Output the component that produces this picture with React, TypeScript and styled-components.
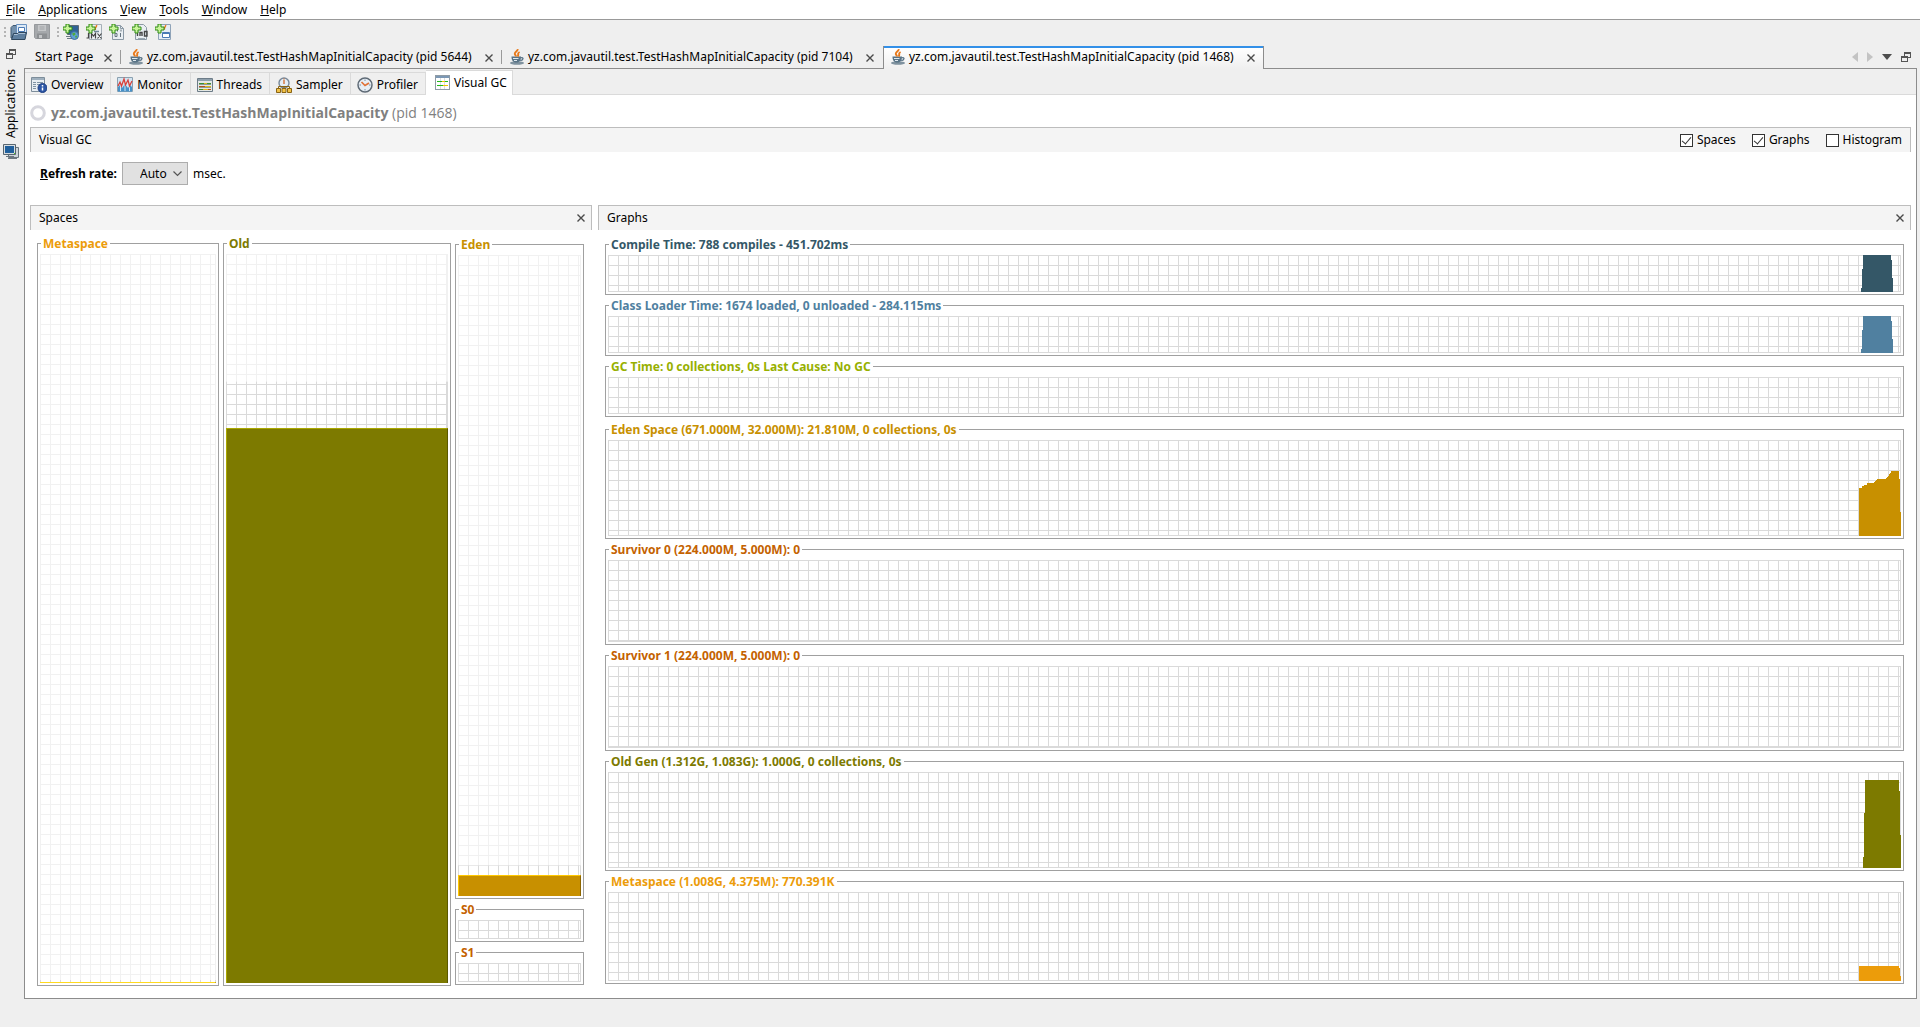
import React, { useState } from "react";
import styled, { createGlobalStyle, css } from "styled-components";

const GlobalStyle = createGlobalStyle`
  *, *::before, *::after { box-sizing: border-box; }
  body { margin: 0; background: #efefef; }
  body, button, select, input {
    font-family: "Noto Sans", "Open Sans", sans-serif;
    font-size: 12px;
    line-height: 16px;
    color: #000;
  }
  button { margin: 0; padding: 0; border: 0; background: none; white-space: nowrap; }
  svg { display: block; flex: none; }
`;

const palette = {
  chrome: "#efefef",
  line: "#8c8c8c",
  frame: "#a0a0a0",
  soft: "#bdbdbd",
  tabLine: "#dadada",
  grid: "#dadada",
  gridLight: "#f1f1f1",
  compile: "#345767",
  loader: "#5080a0",
  gc: "#97b000",
  eden: "#c89000",
  survivor: "#c46200",
  old: "#7d7a00",
  meta: "#ec9c0a",
};

/* ---------- window shell ---------- */

const Window = styled.div`
  display: flex;
  flex-direction: column;
  min-height: 100vh;
`;

const MenuBar = styled.nav`
  display: flex;
  gap: 13px;
  height: 20px;
  padding: 0 6px;
  background: #fff;
  border-bottom: 1px solid #999;
`;

const MenuItem = styled.button`
  height: 19px;
  line-height: 19px;
`;

const Toolbar = styled.div`
  display: flex;
  align-items: center;
  gap: 7px;
  height: 24px;
  padding: 0 4px;
`;

const ToolGroup = styled.div`
  display: flex;
  align-items: center;
  gap: 7px;
`;

const Grip = styled.span`
  width: 2px;
  height: 11px;
  margin-right: -3px;
  background: repeating-linear-gradient(#b4b4b4 0 2px, transparent 2px 4px);
`;

const Workspace = styled.div`
  display: flex;
  flex: 1;
  padding: 2px 3px 28px 0;
`;

const Rail = styled.aside`
  display: flex;
  flex-direction: column;
  align-items: center;
  width: 24px;
  flex: none;
  padding: 3px 2px 0 0;
  gap: 10px;
`;

const RailButton = styled.button`
  display: flex;
  align-items: center;
  gap: 6px;
  writing-mode: vertical-rl;
  transform: rotate(180deg);

  svg { transform: rotate(180deg); }
`;

const Editor = styled.main`
  display: flex;
  flex-direction: column;
  flex: 1;
  min-width: 0;
`;

/* ---------- document tabs ---------- */

const DocTabs = styled.div`
  display: flex;
  height: 23px;
`;

const DocTab = styled.div<{ $active?: boolean; $divider?: boolean; $process?: boolean }>`
  display: flex;
  align-items: center;
  justify-content: space-between;
  height: 23px;
  min-width: ${(p) => (p.$process ? 381 : 97)}px;
  padding: 0 9px 0 8px;
  gap: 4px;
  border-bottom: 1px solid ${palette.line};
  position: relative;

  ${(p) =>
    p.$divider &&
    css`
      &::after {
        content: "";
        position: absolute;
        right: 0;
        top: 4px;
        height: 14px;
        border-right: 1px solid #9a9a9a;
      }
    `}

  ${(p) =>
    p.$active &&
    css`
      border: solid ${palette.line};
      border-width: 0 1px;
      padding: 0 8px 1px 7px;
      background: linear-gradient(#3390e8 0 2px, #fff 2px, ${palette.chrome});
    `}
`;

const DocTitle = styled.button`
  display: flex;
  align-items: center;
  gap: 4px;
  height: 22px;
`;

const CloseButton = styled.button`
  display: flex;
  padding-top: 2px;
`;

const DocTabsEnd = styled.div`
  display: flex;
  flex: 1;
  justify-content: flex-end;
  align-items: center;
  gap: 9px;
  padding-right: 6px;
  border-bottom: 1px solid ${palette.line};
`;

const Document = styled.section`
  display: flex;
  flex-direction: column;
  flex: 1;
  background: #fff;
  border: solid ${palette.line};
  border-width: 0 1px 1px;
`;

/* ---------- view tabs ---------- */

const ViewTabs = styled.div`
  display: flex;
  align-items: flex-end;
  height: 26px;
  background: ${palette.chrome};
  box-shadow: inset 0 -1px ${palette.tabLine};
`;

const ViewTab = styled.button<{ $active?: boolean }>`
  display: flex;
  align-items: center;
  gap: 4px;
  height: 23px;
  padding: 3px 7px 0 6px;
  border: solid ${palette.tabLine};
  border-width: 1px 1px 1px 0;

  ${(p) =>
    p.$active &&
    css`
      height: 25px;
      padding: 0 5px 1px 9px;
      border-width: 1px 1px 0 0;
      background: #fff;
    `}
`;

/* ---------- document content ---------- */

const Content = styled.div`
  display: flex;
  flex-direction: column;
  flex: 1;
  padding: 0 5px;
`;

const Heading = styled.h1`
  display: flex;
  align-items: center;
  gap: 5px;
  height: 32px;
  margin: 0;
  padding-top: 3px;
  font-family: "Open Sans", "Noto Sans", sans-serif;
  font-size: 14px;
  line-height: 20px;
  color: #808080;
`;

const Pid = styled.span`
  font-weight: 400;
`;

const HeaderBar = styled.header`
  display: flex;
  align-items: center;
  justify-content: space-between;
  height: 25px;
  padding: 0 6px 0 8px;
  background: #f4f4f4;
  border: solid ${palette.soft};
  border-width: 1px 1px 0;
`;

const BarTitle = styled.h2`
  margin: 0;
  font-size: 12px;
  font-weight: 400;
`;

const Toggles = styled.div`
  display: flex;
  gap: 16px;
  padding-right: 2px;
`;

const Toggle = styled.label`
  display: flex;
  align-items: center;
  gap: 4px;
`;

const Tick = styled.input`
  appearance: none;
  display: grid;
  place-items: center;
  width: 13px;
  height: 13px;
  margin: 0;
  background: #fff;
  border: 1px solid #333;

  &:checked::after {
    content: "";
    width: 5px;
    height: 9px;
    margin-bottom: 3px;
    border: solid #333;
    border-width: 0 1px 1px 0;
    transform: rotate(40deg);
  }
`;

const RateRow = styled.div`
  display: flex;
  align-items: center;
  gap: 5px;
  height: 53px;
  padding: 0 10px 10px;
`;

const RateLabel = styled.label`
  font-weight: 700;
`;

const SelectBox = styled.span`
  display: grid;
  align-items: center;
  width: 66px;

  > * { grid-area: 1 / 1; }
  > svg { justify-self: end; margin-right: 6px; pointer-events: none; }
`;

const Select = styled.select`
  appearance: none;
  height: 23px;
  padding: 0 17px;
  background: #e1e1e1;
  border: 1px solid #adadad;
  border-radius: 0;
`;

const Panels = styled.div`
  display: grid;
  grid-template-columns: minmax(0, 562fr) minmax(0, 1313fr);
  gap: 6px;
  flex: 1;
`;

const Panel = styled.section`
  display: flex;
  flex-direction: column;
`;

/* ---------- framed plots ---------- */

const SpaceColumns = styled.div`
  display: grid;
  grid-template-columns: minmax(0, 182fr) minmax(0, 228fr) minmax(0, 129fr);
  gap: 4px;
  flex: 1;
  padding: 5px 8px 12px 7px;
`;

const YoungColumn = styled.div`
  display: flex;
  flex-direction: column;
  gap: 2px;
  padding: 1px 0;
`;

const GraphStack = styled.div`
  display: flex;
  flex-direction: column;
  gap: 4px;
  flex: 1;
  padding: 6px 7px 14px;
`;

const GraphGroup = styled.div<{ $grow?: boolean }>`
  display: flex;
  flex-direction: column;
  gap: 2px;
  flex: ${(p) => (p.$grow ? "1" : "none")};
`;

const Frame = styled.fieldset<{ $height?: number; $weight?: number }>`
  display: flex;
  min-width: 0;
  margin: 0;
  padding: 2px;
  border: 1px solid ${palette.frame};
  flex: ${(p) => (p.$height ? `0 0 ${p.$height}px` : `${p.$weight ?? 1} 1 0`)};
`;

const FrameTitle = styled.legend<{ $color: string }>`
  margin-left: 1px;
  padding: 0 2px;
  font-weight: 700;
  line-height: 17px;
  white-space: nowrap;
  color: ${(p) => p.$color};
`;

const gridLines = (color: string) => css`
  background-image:
    linear-gradient(${color}, ${color}),
    linear-gradient(${color}, ${color}),
    linear-gradient(${color} 1px, transparent 1px),
    linear-gradient(90deg, ${color} 1px, transparent 1px);
  background-size: 1px 100%, 100% 1px, 10px 10px, 10px 10px;
  background-position: right top, left bottom, left top, left top;
  background-repeat: no-repeat, no-repeat, repeat, repeat;
`;

const Grid = styled.div<{ $light?: boolean }>`
  position: relative;
  flex: 1;
  ${(p) => gridLines(p.$light ? palette.gridLight : palette.grid)}
`;

const Committed = styled.div`
  position: absolute;
  inset: 0;
  background-color: #fff;
  ${gridLines(palette.grid)}
`;

const Used = styled.div<{ $fill: string; $hi: string; $lo: string }>`
  position: absolute;
  inset: auto 0 0;
  min-height: 1px;
  background: ${(p) => p.$fill};
  border: solid ${(p) => p.$hi};
  border-width: 1px 1px 0;
  border-right-color: ${(p) => p.$lo};
`;

const History = styled.svg`
  position: absolute;
  right: 0;
  top: 0;
  width: 42px;
  height: 100%;
`;

/* ---------- icons ---------- */

const Cross = () => (
  <svg width="8" height="8" viewBox="0 0 8 8" stroke="#4a4a4a" strokeWidth="1.4">
    <path d="M.5.5l7 7M7.5.5l-7 7" />
  </svg>
);

const RestoreIcon = () => (
  <svg width="10" height="10" viewBox="0 0 10 10" fill="none" stroke="#555" shapeRendering="crispEdges">
    <path d="M3.5 4V.5h6v5H7" />
    <path d="M3 1h7M0 5h7" strokeWidth="2" />
    <path d="M.5 4.5h6v5h-6z" />
  </svg>
);

const ChevronDown = () => (
  <svg width="9" height="6" viewBox="0 0 9 6" fill="none" stroke="#555" strokeWidth="1.2">
    <path d="M.5.5l4 4 4-4" />
  </svg>
);

const JavaIcon = () => (
  <svg width="14" height="16" viewBox="0 0 14 16" fill="none">
    <ellipse cx="7" cy="14" rx="7" ry="1.8" fill="#7f929f" />
    <path d="M1.500 7.500h9.500c0 3.500-1 6-4.700 6S1.500 11 1.500 7.500z" fill="#587386" />
    <path d="M3 9.500h5.500M4 11.500h3" stroke="#dfe8ee" />
    <path d="M11 8.800c2.800-.8 2.800 2.200-.8 2.900" stroke="#587386" strokeWidth="1.300" />
    <path d="M7.500 0c1 2-3.500 3-2.600 5.200.3.900 1 1.300 1.100 2.300M9.600 3C6.500 4.500 9.500 5.400 7.600 7.500" stroke="#e8791a" strokeWidth="1.900" />
  </svg>
);

const OpenIcon = () => (
  <svg width="17" height="16" viewBox="0 0 17 16">
    <path d="M1 14V3.500L3 1.500h4v12z" fill="#7390ab" stroke="#3f5870" />
    <path d="M6.500.5h10v9h-10z" fill="#dce9f6" stroke="#6a92c0" />
    <path d="M8.500 3.500h6v4h-6z" fill="#fff" stroke="#4a7ab5" />
    <path d="M1.500 15.500l2-6h4l1-1h8l-1.500 7z" fill="#5e7f9f" stroke="#2f475e" />
    <path d="M4 10.500h3.500l1-1H15" stroke="#a9c0d6" fill="none" />
  </svg>
);

const SaveIcon = () => (
  <svg width="16" height="16" viewBox="0 0 16 16">
    <path d="M.5.5h15v14h-14l-1-1z" fill="#a5a8ab" stroke="#96999c" />
    <path d="M4 1h8v6H4z" fill="#c4c6c8" />
    <path d="M5.500 3h5M5.500 5h5" stroke="#a0a3a6" />
    <path d="M3 9.500h10V15H3z" fill="#8d9093" />
    <path d="M5 11h3v3H5z" fill="#c4c6c8" />
  </svg>
);

const Plus = () => (
  <path d="M3.500.5h3v3h3v3h-3v3h-3v-3h-3v-3h3z" fill="#c9f59a" stroke="#2f8a12" transform="translate(-.5 -.5)" />
);

const AddHostIcon = () => (
  <svg width="16" height="16" viewBox="0 0 16 16">
    <path d="M4.500 1.500h11v9h-11z" fill="#2f6296" stroke="#5d6b76" />
    <path d="M3 12.500h7M4 14.500h5" stroke="#6d7a84" />
    <circle cx="11.500" cy="11.500" r="4" fill="#5f9fd6" stroke="#3d6f9c" />
    <path d="M9 9.500l3-1 .5 2-2 1.500zM12 12l2.500-.5-1.500 3z" fill="#4faa3c" />
    <Plus />
  </svg>
);

const AddJmxIcon = () => (
  <svg width="16" height="16" viewBox="0 0 16 16" fill="none">
    <path d="M3.500.5h12v15h-12z" fill="#edf1f4" stroke="#a5afb7" />
    <path d="M10.500 1c1 1.800-2.500 2.500-1 5" stroke="#e8791a" strokeWidth="1.500" />
    <path d="M8 7.500h5" stroke="#6f8797" strokeWidth="1.500" />
    <path d="M2.500 9v5H.5M5.500 14.500v-5l2 2.500 2-2.500v5M11.500 9.500l4 5M15.500 9.500l-4 5" stroke="#444" strokeWidth="1.200" />
    <Plus />
  </svg>
);

const AddDumpIcon = () => (
  <svg width="16" height="16" viewBox="0 0 16 16" fill="none">
    <path d="M3.500 1.500h8l3 3v11h-11z" fill="#e9eef2" stroke="#8b99a5" />
    <path d="M11.500 1.500v3h3" stroke="#8b99a5" />
    <path d="M8.500 4.500v3M6 9.500h2v3H6zM11.500 9v4M12 5.500v2" stroke="#66747f" />
    <Plus />
  </svg>
);

const AddSnapshotIcon = () => (
  <svg width="16" height="16" viewBox="0 0 16 16" fill="none">
    <path d="M3.500.5h8l3 3v12h-11z" fill="#e9eef2" stroke="#8b99a5" />
    <path d="M5.500 7v5M8 12V8.500h2V12M12.500 7.500h2.500V12h-2.500z" stroke="#444" strokeWidth="1.400" />
    <path d="M6 14.500h7" stroke="#9aa7b1" />
    <Plus />
  </svg>
);

const AddAppIcon = () => (
  <svg width="16" height="16" viewBox="0 0 16 16" fill="none">
    <path d="M3.500.5h12v15h-12z" fill="#e6edf5" stroke="#8fa3b8" />
    <path d="M10.500 1c1 1.500-2 2-1 4.500" stroke="#e8791a" strokeWidth="1.500" />
    <path d="M7.500 8.500h7v5h-7z" fill="#fff" stroke="#4a7ab5" />
    <path d="M8 9.500h6" stroke="#4a7ab5" />
    <Plus />
  </svg>
);

const HostsIcon = () => (
  <svg width="16" height="15" viewBox="0 0 16 15" fill="none">
    <path d="M5.500 3.500h10v10h-10z" fill="#cfd6db" stroke="#69757e" />
    <path d="M.5.5h12v10H.5z" fill="#d8dee2" stroke="#56636d" />
    <path d="M2 2h9v7H2z" fill="#1f5f9c" />
    <path d="M3 12.500h8M5 14.500h9" stroke="#69757e" />
    <path d="M11 9.500h1" stroke="#4c2" />
  </svg>
);

const OverviewIcon = () => (
  <svg width="16" height="16" viewBox="0 0 16 16" fill="none">
    <path d="M.5.5h13v14H.5z" fill="#e8eef3" stroke="#7d8d9a" />
    <path d="M1 2h12" stroke="#9fb0be" strokeWidth="2" />
    <path d="M2 5.500h3M6 5.500h6M2 7.500h3M6 7.500h3M2 9.500h3M2 11.500h3" stroke="#7f93a4" />
    <circle cx="11.500" cy="11" r="4.500" fill="#2c56a6" stroke="#1f3f80" />
    <path d="M11.500 8v1.500M11.500 10.500v3" stroke="#fff" strokeWidth="1.500" />
  </svg>
);

const MonitorIcon = () => (
  <svg width="16" height="16" viewBox="0 0 16 16" fill="none">
    <path d="M.5.5h15v14H.5z" fill="#d3e4f1" stroke="#8aa0b0" />
    <path d="M1 14.500V10l2-2 2 3 3-4 3 4 2-3 2 2v4.500z" fill="#4691c9" />
    <path d="M3.500 8v6M8 7v7M12.500 8v6" stroke="#cfe5f5" />
    <path d="M1 9l2-4 1.500 4L7 2l1.500 6L11 3l1.500 6L15 4" stroke="#d9403a" strokeWidth="1.300" />
  </svg>
);

const ThreadsIcon = () => (
  <svg width="16" height="15" viewBox="0 0 16 15" fill="none">
    <path d="M.5.5h15v13H.5z" fill="#e4e8e6" stroke="#6d7c88" />
    <path d="M1 2h14" stroke="#8fa0ad" strokeWidth="2" />
    <path d="M2 5.500h5M10 5.500h4M2 11.500h4" stroke="#3a9135" />
    <path d="M7 5.500h3M8 8.500h6M6 11.500h5" stroke="#e0b81a" />
    <path d="M2 8.500h6M11 11.500h3" stroke="#b8501e" />
    <path d="M2 6.500h12M2 9.500h12" stroke="#8d9a92" />
  </svg>
);

const SamplerIcon = () => (
  <svg width="16" height="16" viewBox="0 0 16 16" fill="none">
    <circle cx="8" cy="6" r="5" fill="#e5edf4" stroke="#77889a" strokeWidth="1.400" />
    <path d="M8 3v4M8 1.500v1" stroke="#d4682a" strokeWidth="1.300" />
    <path d="M2.500 12V9.500h11V12M8 9v3" stroke="#8a6414" />
    <path d="M.5 11.500h4v4h-4zM6 11.500h4v4H6zM11.500 11.500h4v4h-4z" fill="#f2c246" stroke="#8a6414" />
  </svg>
);

const ProfilerIcon = () => (
  <svg width="16" height="16" viewBox="0 0 16 16" fill="none">
    <circle cx="8" cy="8" r="7" fill="#e7eef6" stroke="#5f6b76" strokeWidth="1.500" />
    <path d="M8 2.500V4M8 12v1.500M2.500 8H4M12 8h1.500" stroke="#7b8ea0" />
    <path d="M4.500 5L8 8.500 12 6" stroke="#e0733a" strokeWidth="1.700" />
  </svg>
);

const VisualGcIcon = () => (
  <svg width="15" height="15" viewBox="0 0 15 15" fill="none" shapeRendering="crispEdges">
    <path d="M.5.5h14v14H.5z" fill="#fff" stroke="#8f9ba5" />
    <path d="M1 2h13" stroke="#7b97b4" strokeWidth="2" />
    <path d="M5.500 3v11M9.500 3v11" stroke="#dcdcdc" />
    <path d="M2 6.500h5M10 6.500h3M2 10.500h6" stroke="#22b81c" />
    <path d="M7 6.500h3M8 10.500h5" stroke="#f0c400" />
  </svg>
);

const RingIcon = () => (
  <svg width="16" height="16" viewBox="0 0 16 16" fill="none">
    <circle cx="8" cy="8" r="6.300" stroke="#d6d6dd" strokeWidth="3" />
  </svg>
);

/* ---------- data ---------- */

const menus = ["File", "Applications", "View", "Tools", "Window", "Help"];

const processTitle = "yz.com.javautil.test.TestHashMapInitialCapacity";
const openPids = [5644, 7104, 1468];

const viewTabs = [
  { label: "Overview", icon: <OverviewIcon /> },
  { label: "Monitor", icon: <MonitorIcon /> },
  { label: "Threads", icon: <ThreadsIcon /> },
  { label: "Sampler", icon: <SamplerIcon /> },
  { label: "Profiler", icon: <ProfilerIcon /> },
  { label: "Visual GC", icon: <VisualGcIcon /> },
];

type Series = { height: number; points: string };
type GraphInfo = { title: string; color: string; weight?: number; series?: Series };

const startupBurst: Series = {
  height: 37,
  points: "2,37 2,33 3,33 3,14 4,14 4,0 32,0 32,5 33,5 33,23 34,23 34,37",
};

const timeGraphs: GraphInfo[] = [
  { title: "Compile Time: 788 compiles - 451.702ms", color: palette.compile, series: startupBurst },
  { title: "Class Loader Time: 1674 loaded, 0 unloaded - 284.115ms", color: palette.loader, series: startupBurst },
  { title: "GC Time: 0 collections, 0s Last Cause: No GC", color: palette.gc },
];

const memoryGraphs: GraphInfo[] = [
  {
    title: "Eden Space (671.000M, 32.000M): 21.810M, 0 collections, 0s",
    color: palette.eden,
    weight: 118,
    series: {
      height: 96,
      points:
        "0,96 0,48 3,48 3,46 5,46 5,45 8,45 8,43 15,43 15,42 16,42 16,41 17,41 17,40 18,40 18,39 27,39 27,38 28,38 28,37 29,37 29,36 30,36 30,34 31,34 31,33 32,33 32,31 40,31 40,39 41,39 41,72 42,72 42,96",
    },
  },
  { title: "Survivor 0 (224.000M, 5.000M): 0", color: palette.survivor, weight: 104 },
  { title: "Survivor 1 (224.000M, 5.000M): 0", color: palette.survivor, weight: 104 },
  {
    title: "Old Gen (1.312G, 1.083G): 1.000G, 0 collections, 0s",
    color: palette.old,
    weight: 118,
    series: { height: 96, points: "4,96 4,85 5,85 5,41 6,41 6,8 40,8 40,19 41,19 41,63 42,63 42,96" },
  },
  {
    title: "Metaspace (1.008G, 4.375M): 770.391K",
    color: palette.meta,
    weight: 111,
    series: { height: 89, points: "0,89 0,74 40,74 40,76 41,76 41,84 42,84 42,89" },
  },
];

/* ---------- components ---------- */

const Graph = ({ info, height }: { info: GraphInfo; height?: number }) => (
  <Frame $height={height} $weight={info.weight}>
    <FrameTitle $color={info.color}>{info.title}</FrameTitle>
    <Grid>
      {info.series && (
        <History viewBox={`0 0 42 ${info.series.height}`} preserveAspectRatio="none" shapeRendering="crispEdges">
          <polygon points={info.series.points} fill={info.color} />
        </History>
      )}
    </Grid>
  </Frame>
);

type SpaceProps = {
  title: string;
  color: string;
  committed?: number;
  used?: number;
  hi?: string;
  lo?: string;
  height?: number;
};

const Space = ({ title, color, committed, used, hi = color, lo = color, height }: SpaceProps) => (
  <Frame $height={height}>
    <FrameTitle $color={color}>{title}</FrameTitle>
    <Grid $light={committed !== undefined}>
      {committed !== undefined && (
        <Committed style={{ clipPath: `inset(${(1 - committed) * 100}% 0 0 0)` }} />
      )}
      {used !== undefined && <Used $fill={color} $hi={hi} $lo={lo} style={{ height: `${used * 100}%` }} />}
    </Grid>
  </Frame>
);

export default function App() {
  const [shown, setShown] = useState<Record<string, boolean>>({ Spaces: true, Graphs: true, Histogram: false });

  return (
    <>
      <GlobalStyle />
      <Window>
        <MenuBar>
          {menus.map((m) => (
            <MenuItem key={m}>
              <u>{m[0]}</u>
              {m.slice(1)}
            </MenuItem>
          ))}
        </MenuBar>

        <Toolbar>
          <Grip />
          <ToolGroup>
            <button aria-label="Load"><OpenIcon /></button>
            <button aria-label="Save" disabled><SaveIcon /></button>
          </ToolGroup>
          <Grip />
          <ToolGroup>
            <button aria-label="Add remote host"><AddHostIcon /></button>
            <button aria-label="Add JMX connection"><AddJmxIcon /></button>
            <button aria-label="Add core dump"><AddDumpIcon /></button>
            <button aria-label="Add heap dump"><AddSnapshotIcon /></button>
            <button aria-label="Add snapshot"><AddAppIcon /></button>
          </ToolGroup>
        </Toolbar>

        <Workspace>
          <Rail>
            <button aria-label="Restore window group"><RestoreIcon /></button>
            <RailButton>
              <HostsIcon />
              Applications
            </RailButton>
          </Rail>

          <Editor>
            <DocTabs>
              <DocTab $divider>
                <DocTitle>&nbsp;Start Page</DocTitle>
                <CloseButton aria-label="Close Start Page"><Cross /></CloseButton>
              </DocTab>
              {openPids.map((pid, i) => (
                <DocTab key={pid} $process $active={i === 2} $divider={i === 0}>
                  <DocTitle>
                    <JavaIcon />
                    {processTitle} (pid {pid})
                  </DocTitle>
                  <CloseButton aria-label={`Close pid ${pid}`}><Cross /></CloseButton>
                </DocTab>
              ))}
              <DocTabsEnd>
                <button aria-label="Previous tab">
                  <svg width="6" height="10" viewBox="0 0 6 10"><path d="M6 0v10L0 5z" fill="#c3c3c3" /></svg>
                </button>
                <button aria-label="Next tab">
                  <svg width="6" height="10" viewBox="0 0 6 10"><path d="M0 0v10l6-5z" fill="#c3c3c3" /></svg>
                </button>
                <button aria-label="List tabs">
                  <svg width="10" height="6" viewBox="0 0 10 6"><path d="M0 0h10L5 6z" fill="#4d4d4d" /></svg>
                </button>
                <button aria-label="Restore"><RestoreIcon /></button>
              </DocTabsEnd>
            </DocTabs>

            <Document>
              <ViewTabs>
                {viewTabs.map((t) => (
                  <ViewTab key={t.label} $active={t.label === "Visual GC"}>
                    {t.icon}
                    {t.label}
                  </ViewTab>
                ))}
              </ViewTabs>

              <Content>
                <Heading>
                  <RingIcon />
                  <span>
                    {processTitle} <Pid>(pid 1468)</Pid>
                  </span>
                </Heading>

                <HeaderBar>
                  <BarTitle>Visual GC</BarTitle>
                  <Toggles>
                    {Object.keys(shown).map((name) => (
                      <Toggle key={name}>
                        <Tick
                          type="checkbox"
                          checked={shown[name]}
                          onChange={() => setShown({ ...shown, [name]: !shown[name] })}
                        />
                        {name}
                      </Toggle>
                    ))}
                  </Toggles>
                </HeaderBar>

                <RateRow>
                  <RateLabel htmlFor="rate"><u>R</u>efresh rate:</RateLabel>
                  <SelectBox>
                    <Select id="rate" defaultValue="Auto">
                      <option>Auto</option>
                      <option>100</option>
                      <option>500</option>
                      <option>1000</option>
                    </Select>
                    <ChevronDown />
                  </SelectBox>
                  <span>msec.</span>
                </RateRow>

                <Panels>
                  <Panel>
                    <HeaderBar>
                      <BarTitle>Spaces</BarTitle>
                      <button aria-label="Close Spaces"><Cross /></button>
                    </HeaderBar>
                    <SpaceColumns>
                      <Space title="Metaspace" color={palette.meta} committed={0.0042} used={0.0007} hi="#ffd91e" lo="#8a6a10" />
                      <Space title="Old" color={palette.old} committed={0.825} used={0.762} hi="#aaa800" lo="#5a5800" />
                      <YoungColumn>
                        <Space title="Eden" color={palette.eden} committed={0.0477} used={0.0325} hi="#ffc800" lo="#8c6500" />
                        <Space title="S0" color={palette.survivor} height={41} />
                        <Space title="S1" color={palette.survivor} height={41} />
                      </YoungColumn>
                    </SpaceColumns>
                  </Panel>

                  <Panel>
                    <HeaderBar>
                      <BarTitle>Graphs</BarTitle>
                      <button aria-label="Close Graphs"><Cross /></button>
                    </HeaderBar>
                    <GraphStack>
                      <GraphGroup>
                        {timeGraphs.map((g) => (
                          <Graph key={g.title} info={g} height={59} />
                        ))}
                      </GraphGroup>
                      <GraphGroup $grow>
                        {memoryGraphs.map((g) => (
                          <Graph key={g.title} info={g} />
                        ))}
                      </GraphGroup>
                    </GraphStack>
                  </Panel>
                </Panels>
              </Content>
            </Document>
          </Editor>
        </Workspace>
      </Window>
    </>
  );
}
